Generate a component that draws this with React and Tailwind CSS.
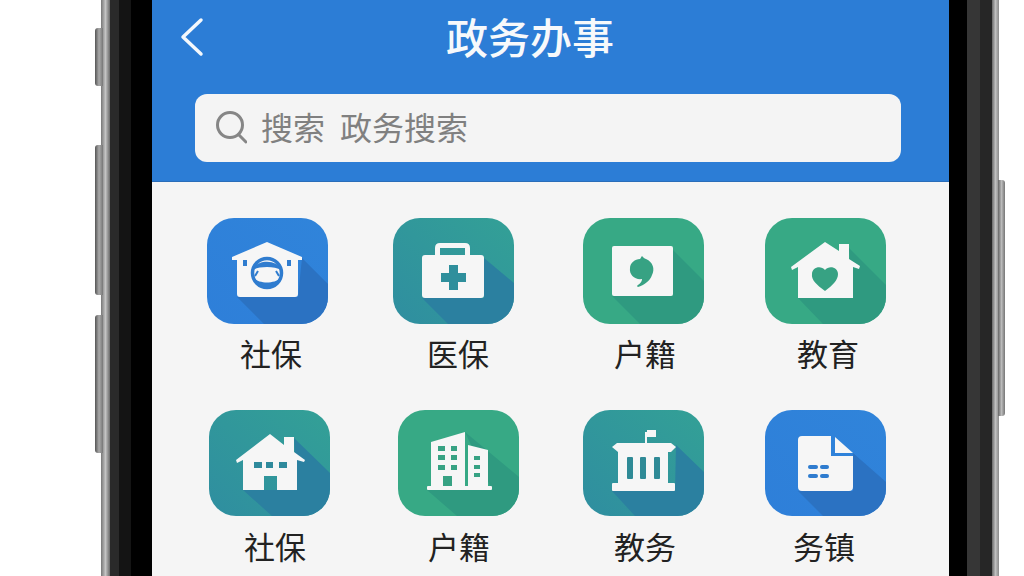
const WHITE = '#f6f6f6';

const Tile = ({ id, from, to, shade, shadow, children }) => (
  <svg width="121" height="106" viewBox="0 0 121 106" className="block">
    <defs>
      <linearGradient id={`g-${id}`} x1="0" y1="1" x2="1" y2="0">
        <stop offset="0" stopColor={from} />
        <stop offset="1" stopColor={to} />
      </linearGradient>
      <clipPath id={`c-${id}`}>
        <rect width="121" height="106" rx="27" />
      </clipPath>
    </defs>
    <g clipPath={`url(#c-${id})`}>
      <rect width="121" height="106" fill={`url(#g-${id})`} />
      <polygon points={shadow} fill={shade} />
    </g>
    {children}
  </svg>
);

const SocialIcon = () => (
  <>
    <path d="M60 24 L95 39 L95 42 L91 42 L91 76 Q91 79 88 79 L33 79 Q30 79 30 76 L30 42 L25 42 L25 39 Z" fill={WHITE} />
    <rect x="36" y="42" width="4" height="6" fill="#2f7ccf" />
    <rect x="80" y="42" width="4" height="6" fill="#2f7ccf" />
    <circle cx="60" cy="55" r="14.5" fill={WHITE} stroke="#2f7ccf" strokeWidth="3.5" />
    <path d="M46 52 C49 41 71 41 74 52 C68 48 52 48 46 52 Z" fill="#2f7ccf" />
    <path d="M47 60 C52 66 68 66 73 60 C72 68 66 70 60 70 C54 70 48 68 47 60 Z" fill="#2f7ccf" />
    <path d="M51 53 L48 58 M69 53 L72 58" stroke="#2f7ccf" strokeWidth="2" />
  </>
);

const MedicalIcon = () => (
  <>
    <path fillRule="evenodd" d="M42 38 V30 Q42 25 47 25 H72 Q77 25 77 30 V38 Z M47 30 V37 H72 V30 Z" fill={WHITE} />
    <rect x="29" y="37" width="62" height="43" rx="3" fill={WHITE} />
    <path d="M56 47 H65 V55 H73 V64 H65 V72 H56 V64 H48 V55 H56 Z" fill="#2f8f9c" />
  </>
);

const CardIcon = () => (
  <>
    <rect x="29" y="28" width="61" height="50" rx="2" fill={WHITE} />
    <path d="M59 38 C61 40 61 40 63 41 C70 44 72 51 69 57 C67 63 61 67 55 69 C54 69 54 67 55 67 C58 65 59 63 59 61 C52 62 46 57 47 50 C47 45 52 41 57 41 C58 40 58 39 59 38 Z" fill="#37a283" />
  </>
);

const HeartHouseIcon = () => (
  <>
    <path d="M60 24 L74 33 V26 H84 V41 L95 48 L94 51 L88 49 V80 H33 V49 L27 52 L26 49 Z" fill={WHITE} />
    <path d="M60 73 C52 67 46 62 47 56 C47 49 56 47 60 52 C64 47 73 49 73 56 C73 62 68 67 60 73 Z" fill="#37a283" />
  </>
);

const HomeIcon = () => (
  <>
    <path d="M61 24 L75 35 V27 H85 V42 L96 50 L95 52 L88 50 V80 H68 V66 H55 V80 H34 V50 L28 53 L27 50 Z" fill={WHITE} />
    <rect x="45" y="52" width="8" height="6" fill="#2f8a9c" />
    <rect x="57" y="52" width="7" height="6" fill="#2f8a9c" />
    <rect x="70" y="52" width="8" height="6" fill="#2f8a9c" />
  </>
);

const BuildingIcon = () => {
  const win = '#37a283';
  return (
    <>
      <polygon points="33,32 67,22 67,77 33,77" fill={WHITE} />
      <polygon points="70,35 90,40 90,77 70,77" fill={WHITE} />
      <rect x="29" y="76" width="65" height="4" rx="1" fill={WHITE} />
      {[36, 45, 55].map((y) => (
        <g key={y} fill={win}>
          <rect x="40" y={y} width="7" height="5" />
          <rect x="53" y={y} width="6" height="5" />
        </g>
      ))}
      <rect x="45" y="66" width="9" height="10" fill={win} />
      {[46, 55, 63].map((y) => (
        <rect key={y} x="76" y={y} width="6" height="4" fill={win} />
      ))}
    </>
  );
};

const BankIcon = () => (
  <>
    <rect x="62" y="22" width="2" height="12" fill={WHITE} />
    <rect x="64" y="20" width="9" height="7" fill={WHITE} />
    <polygon points="34,33 88,33 93,37 88,42 35,42 29,37" fill={WHITE} />
    <rect x="35" y="42" width="50" height="31" fill={WHITE} />
    <rect x="44" y="47" width="6" height="22" rx="1" fill="#2f8a96" />
    <rect x="57" y="47" width="6" height="22" rx="1" fill="#2f8a96" />
    <rect x="71" y="47" width="6" height="22" rx="1" fill="#2f8a96" />
    <rect x="29" y="73" width="63" height="8" rx="1" fill={WHITE} />
  </>
);

const DocIcon = () => (
  <>
    <path d="M37 26 H66 V46 H88 V77 Q88 81 84 81 H37 Q33 81 33 77 V30 Q33 26 37 26 Z" fill={WHITE} />
    <path d="M70 27 L88 43 H70 Z" fill={WHITE} />
    <rect x="43" y="55" width="10" height="4" rx="2" fill="#2f7ccf" />
    <rect x="55" y="55" width="9" height="4" rx="2" fill="#2f7ccf" />
    <rect x="43" y="64" width="10" height="4" rx="2" fill="#2f7ccf" />
    <rect x="55" y="64" width="9" height="4" rx="2" fill="#2f7ccf" />
  </>
);

const BLUE = { from: '#2e7fd9', to: '#3084da', shade: '#2b72c2' };
const TEAL = { from: '#2f8ea0', to: '#33a096', shade: '#2b80a0' };
const GREEN = { from: '#37a985', to: '#37a985', shade: '#2f9a80' };

const rowOne = [
  { id: 'a', label: '社保', gap: 'ml-0', text: 'mt-[11px] pl-[7px]', color: BLUE, shadow: '95,40 121,66 121,106 57,106 30,79 91,79', icon: <SocialIcon /> },
  { id: 'b', label: '医保', gap: 'ml-[65px]', text: 'mt-[11px] pl-[9px]', color: TEAL, shadow: '91,40 121,65 121,106 55,106 29,80 91,80', icon: <MedicalIcon /> },
  { id: 'c', label: '户籍', gap: 'ml-[69px]', text: 'mt-[11px] pl-[3px]', color: GREEN, shadow: '90,32 121,63 121,106 57,106 29,78 90,78', icon: <CardIcon /> },
  { id: 'd', label: '教育', gap: 'ml-[61px]', text: 'mt-[11px] pl-[5px]', color: GREEN, shadow: '84,30 121,67 121,106 58,106 33,80 88,80', icon: <HeartHouseIcon /> },
];

const rowTwo = [
  { id: 'e', label: '社保', gap: 'ml-[2px]', text: 'mt-[12px] pl-[11px]', color: TEAL, shadow: '85,28 121,63 121,106 63,106 34,80 88,80', icon: <HomeIcon /> },
  { id: 'f', label: '户籍', gap: 'ml-[68px]', text: 'mt-[12px] pl-[1px]', color: GREEN, shadow: '67,22 121,67 121,106 59,106 29,80 94,80', icon: <BuildingIcon /> },
  { id: 'g', label: '教务', gap: 'ml-[64px]', text: 'mt-[12px] pl-[3px]', color: TEAL, shadow: '93,35 121,62 121,106 52,106 29,81 92,81', icon: <BankIcon /> },
  { id: 'h', label: '务镇', gap: 'ml-[61px]', text: 'mt-[12px] pr-[3px]', color: BLUE, shadow: '88,43 121,72 121,106 58,106 33,81 88,81', icon: <DocIcon /> },
];

const ServiceItem = ({ item }) => (
  <div className={`flex w-[121px] flex-col items-center ${item.gap}`}>
    <Tile id={item.id} {...item.color} shadow={item.shadow}>
      {item.icon}
    </Tile>
    <span className={`h-[36px] text-[31px] leading-[36px] text-[#222] ${item.text}`}>
      {item.label}
    </span>
  </div>
);

export default function App() {
  return (
    <div
      lang="zh-CN"
      className="relative flex h-[576px] w-[1024px] overflow-hidden bg-white pl-[101px] font-['Noto_Sans_CJK_SC','Noto_Sans',sans-serif]"
    >
      {/* side buttons */}
      <div className="absolute left-[95px] top-[28px] h-[58px] w-[8px] rounded-l-[3px] bg-linear-to-r from-[#555] via-[#aaa] to-[#777]" />
      <div className="absolute left-[95px] top-[145px] h-[150px] w-[8px] rounded-l-[3px] bg-linear-to-r from-[#555] via-[#aaa] to-[#777]" />
      <div className="absolute left-[95px] top-[315px] h-[138px] w-[8px] rounded-l-[3px] bg-linear-to-r from-[#555] via-[#aaa] to-[#777]" />
      <div className="absolute left-[998px] top-[180px] h-[236px] w-[7px] rounded-r-[3px] bg-linear-to-r from-[#666] via-[#bbb] to-[#777]" />

      <div className="w-[9px] bg-linear-to-r from-[#777] via-[#c4c4c4] to-[#6a6a6a]" />
      <div className="w-[9px] bg-[#2a2a2a]" />
      <div className="w-[12px] bg-[#141414]" />
      <div className="w-[21px] bg-black" />

      <div className="flex w-[797px] flex-col bg-[#f5f5f5]">
        <header className="h-[182px] border-b border-[#2a6db9] bg-[#2c7dd6]">
          <div className="flex h-[74px] items-center">
            <svg width="24" height="40" viewBox="0 0 24 40" className="ml-[28px]" fill="none" stroke="#f4f8fc" strokeWidth="3.5" strokeLinecap="round" strokeLinejoin="round">
              <path d="M21 3 L3 20 L21 37" />
            </svg>
            <h1 className="ml-[242px] pb-[2px] text-[42px] font-medium leading-none text-[#f7f9fb]">政务办事</h1>
          </div>
          <div className="ml-[43px] mr-[48px] mt-[20px] flex h-[68px] items-center rounded-[12px] bg-[#f4f4f4] pl-[20px]">
            <svg width="32" height="36" viewBox="0 0 32 36" fill="none" stroke="#868686" strokeWidth="3" strokeLinecap="round">
              <circle cx="15" cy="15" r="12.5" />
              <path d="M24 25 L31 32" />
            </svg>
            <div className="ml-[14px] flex gap-[15px] pb-[4px] text-[32px] leading-none text-[#808080]">
              <span>搜索</span>
              <span>政务搜索</span>
            </div>
          </div>
        </header>

        <main className="flex flex-1 flex-col pl-[55px] pt-[36px]">
          <div className="flex">
            {rowOne.map((item) => (
              <ServiceItem key={item.id} item={item} />
            ))}
          </div>
          <div className="mt-[39px] flex">
            {rowTwo.map((item) => (
              <ServiceItem key={item.id} item={item} />
            ))}
          </div>
        </main>
      </div>

      <div className="w-[18px] bg-black" />
      <div className="w-[13px] bg-[#363636]" />
      <div className="w-[12px] bg-[#262626]" />
      <div className="w-[7px] bg-linear-to-r from-[#6a6a6a] via-[#c0c0c0] to-[#8a8a8a]" />
    </div>
  );
}
